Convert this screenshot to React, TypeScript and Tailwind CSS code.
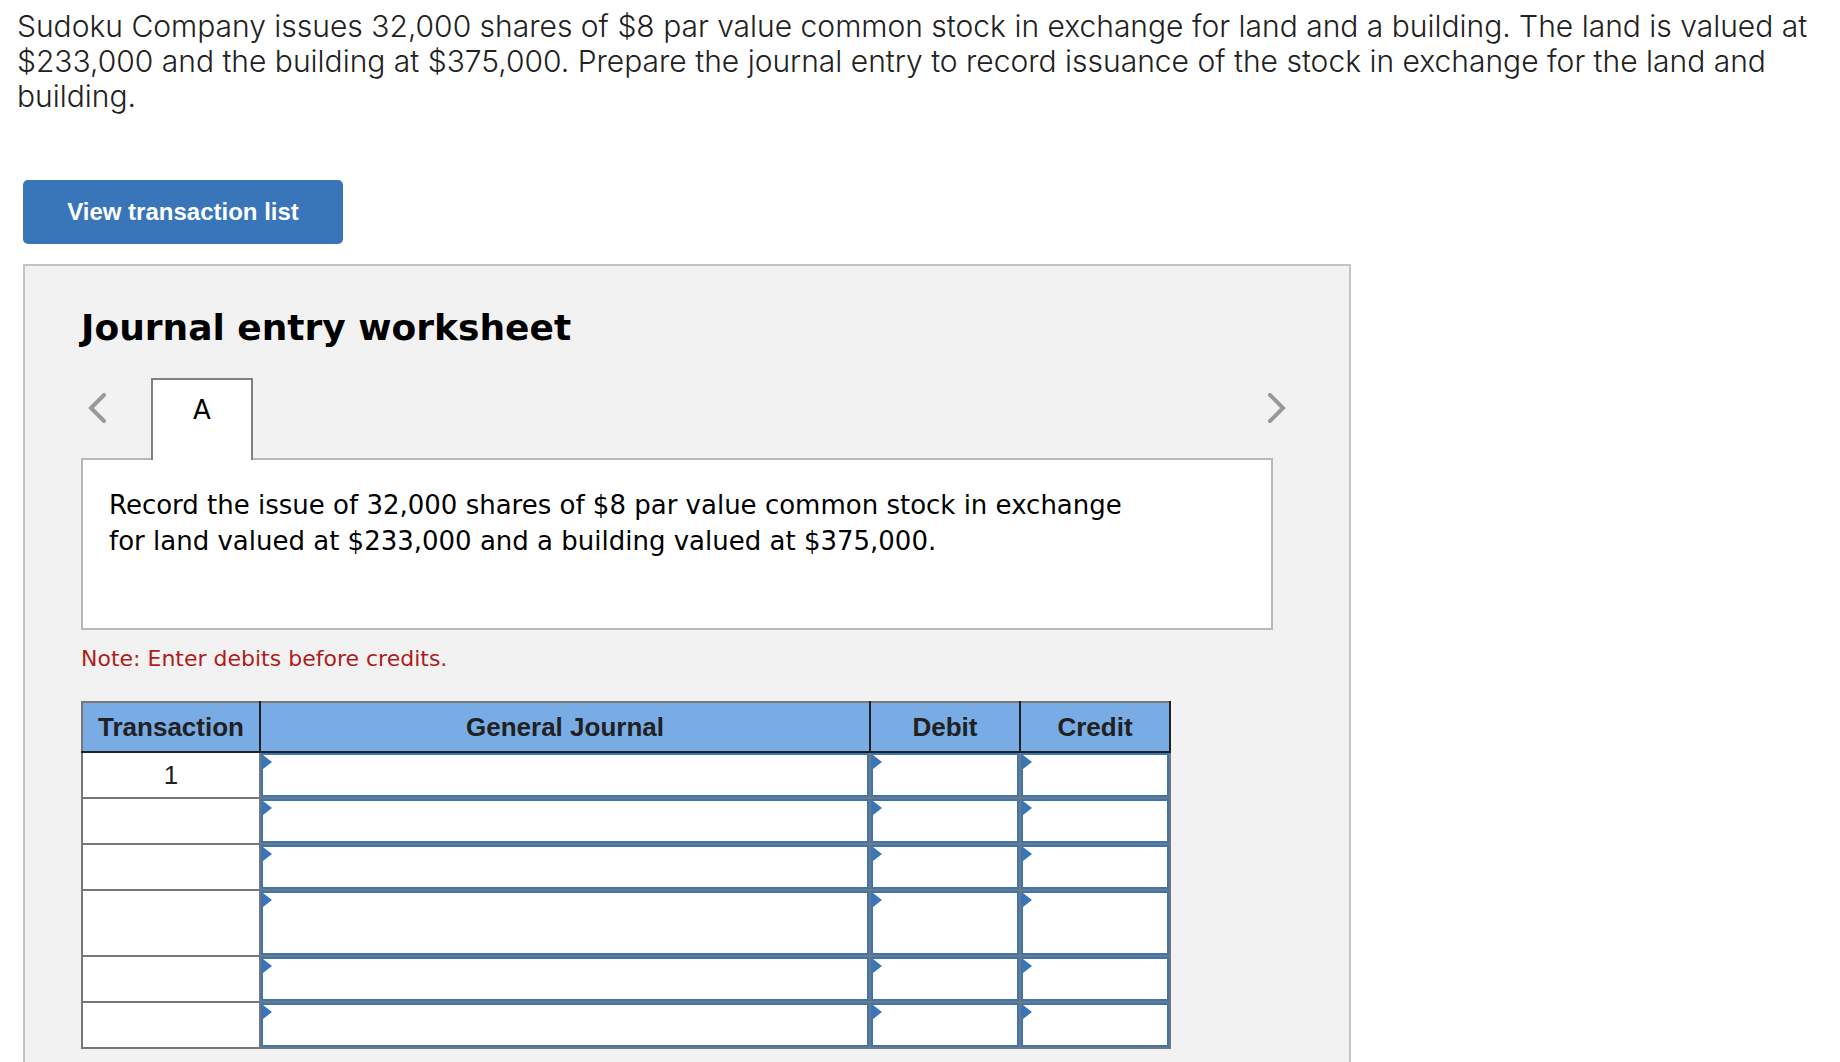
import { useState } from 'react';
import clsx from 'clsx';

interface JournalRow {
  id: number;
  transaction: string;
  tall?: boolean;
}

interface EntryCellProps {
  label: string;
  tall?: boolean;
}

const rows: JournalRow[] = [
  { id: 1, transaction: '1' },
  { id: 2, transaction: '' },
  { id: 3, transaction: '' },
  { id: 4, transaction: '', tall: true },
  { id: 5, transaction: '' },
  { id: 6, transaction: '' },
];

const entryColumns = ['General Journal', 'Debit', 'Credit'];

const Chevron = ({ points }: { points: string }) => (
  <svg width="18" height="30" viewBox="0 0 18 30" fill="none" aria-hidden="true">
    <polyline
      points={points}
      stroke="#999999"
      strokeWidth="4"
      strokeLinecap="round"
      strokeLinejoin="miter"
    />
  </svg>
);

const EntryCell = ({ label, tall }: EntryCellProps) => {
  const [value, setValue] = useState('');

  return (
    <td className="border-r-2 border-b-2 border-[#777777] p-0">
      <div className="relative">
        <input
          type="text"
          aria-label={label}
          value={value}
          onChange={(e) => setValue(e.target.value)}
          className={clsx(
            'block w-full border-2 border-[#3875b9] bg-white px-4 text-[26px] outline-none',
            tall ? 'h-16' : 'h-11'
          )}
        />
        <svg
          className="pointer-events-none absolute top-0.5 left-0.5"
          width="9"
          height="14"
          viewBox="0 0 9 14"
          aria-hidden="true"
        >
          <path d="M0 0L9 7L0 14Z" fill="#3875b9" />
        </svg>
      </div>
    </td>
  );
};

const JournalTable = () => (
  <table className="w-[1090px] table-fixed border-collapse border-2 border-[#777777] bg-white font-['Liberation_Sans',Arial,sans-serif] text-[26px] leading-8 text-[#212121]">
    <colgroup>
      <col className="w-[178px]" />
      <col />
      <col className="w-[150px]" />
      <col className="w-[150px]" />
    </colgroup>
    <thead>
      <tr className="h-[50px] bg-[#79ace5]">
        {['Transaction', ...entryColumns].map((name) => (
          <th
            key={name}
            scope="col"
            className="border-r-2 border-b-2 border-[#212121] p-0 text-center font-bold"
          >
            {name}
          </th>
        ))}
      </tr>
    </thead>
    <tbody>
      {rows.map((row) => (
        <tr key={row.id}>
          <td className="border-r-2 border-b-2 border-[#777777] p-0 text-center">
            {row.transaction}
          </td>
          {entryColumns.map((name) => (
            <EntryCell key={name} label={`${name}, row ${row.id}`} tall={row.tall} />
          ))}
        </tr>
      ))}
    </tbody>
  </table>
);

const App = () => (
  <main className="flex min-h-screen flex-col bg-white">
    <p className="px-[17px] pt-[9px] font-[Inter,sans-serif] text-[30px] leading-[35px] font-light text-[#212121]">
      Sudoku Company issues 32,000 shares of $8 par value common stock in exchange for land and a
      building. The land is valued at $233,000 and the building at $375,000. Prepare the journal
      entry to record issuance of the stock in exchange for the land and building.
    </p>

    <div className="mt-[66px] px-[23px]">
      <button
        type="button"
        className="h-16 w-80 rounded-[5px] bg-[#3875b9] font-['Liberation_Sans',Arial,sans-serif] text-2xl font-bold text-white"
      >
        View transaction list
      </button>
    </div>

    <section className="mx-[23px] mt-5 w-full max-w-[1328px] grow border-2 border-b-0 border-[#c4c4c4] bg-[#f2f2f2] px-14 pt-[38px] pb-3 font-[Verdana,'DejaVu_Sans',sans-serif] text-black">
      <h1 className="text-4xl leading-[48px] font-bold">Journal entry worksheet</h1>

      <div className="mt-[26px] flex items-start px-[7px]">
        <button type="button" aria-label="Previous entry" className="mt-[15px]">
          <Chevron points="16,2 3,15 16,28" />
        </button>
        {/* the tab overlaps the top border of the box below it */}
        <button
          type="button"
          className="relative ml-[45px] h-[82px] w-[102px] border-2 border-b-0 border-[#808080] bg-white pb-5 text-[26px]"
        >
          A
        </button>
        <button type="button" aria-label="Next entry" className="mt-[15px] ml-auto">
          <Chevron points="2,2 15,15 2,28" />
        </button>
      </div>

      <div className="-mt-0.5 mr-5 min-h-[172px] border-2 border-[#b8b8b8] bg-white px-[26px] pt-[27px]">
        <p className="max-w-[1040px] text-[26px] leading-9">
          Record the issue of 32,000 shares of $8 par value common stock in exchange for land valued
          at $233,000 and a building valued at $375,000.
        </p>
      </div>

      <p className="mt-[13px] mb-[26px] text-[22px] leading-8 text-[#b01c1c]">
        Note: Enter debits before credits.
      </p>

      <JournalTable />
    </section>
  </main>
);

export default App;
